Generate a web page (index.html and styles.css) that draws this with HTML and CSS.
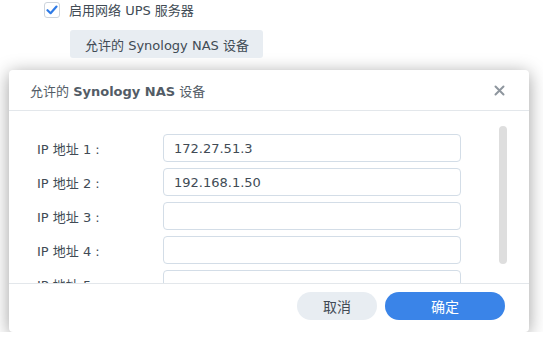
FILE: index.html
```html
<!DOCTYPE html>
<html>
	<head>
		<meta charset="utf-8">
		<title>UPS 服务器</title>
		<link rel="stylesheet" href="styles.css">
	</head>
	<body>

	<section class="page">
		<label class="check-row">
			<span class="checkbox">
				<svg width="12" height="10" viewBox="0 0 12 10"><path d="M1.5 5.2 L4.6 8.2 L10.5 1.6" fill="none" stroke="#2f7be6" stroke-width="2.2" stroke-linecap="round" stroke-linejoin="round"/></svg>
			</span>
			<span>启用网络 UPS 服务器</span>
		</label>
		<button class="btn-plain">允许的 Synology NAS 设备</button>
	</section>

	<div class="modal">
		<div class="modal-head">
			<span class="modal-title">允许的 <b>Synology NAS</b> 设备</span>
			<svg class="close" width="11" height="11" viewBox="0 0 11 11"><path d="M1.5 1.5 L9.5 9.5 M9.5 1.5 L1.5 9.5" stroke="#8e969e" stroke-width="2" stroke-linecap="round"/></svg>
		</div>
		<div class="modal-body">
			<div class="form">
				<span class="lbl">IP 地址 1 :</span><input class="field" value="172.27.51.3">
				<span class="lbl">IP 地址 2 :</span><input class="field" value="192.168.1.50">
				<span class="lbl">IP 地址 3 :</span><input class="field" value="">
				<span class="lbl">IP 地址 4 :</span><input class="field" value="">
				<span class="lbl">IP 地址 5 :</span><input class="field" value="">
			</div>
			<div class="scrollbar"></div>
		</div>
		<div class="modal-foot">
			<button class="btn-cancel">取消</button>
			<button class="btn-ok">确定</button>
		</div>
	</div>

	</body>
</html>
```

FILE: styles.css
```css
* {
	margin: 0;
	padding: 0;
	box-sizing: border-box;
}
body {
	background: #fff;
	font-family: "DejaVu Sans", "Noto Sans CJK SC", sans-serif;
	font-size: 13px;
	color: #414b55;
}
.page {
	padding-left: 44px;
}
.check-row {
	display: flex;
	align-items: center;
	gap: 9px;
	height: 18px;
	padding-top: 1px;
}
.checkbox {
	width: 16px;
	height: 16px;
	border: 1px solid #cdd4dc;
	border-radius: 3px;
	display: flex;
	align-items: center;
	justify-content: center;
}
.btn-plain {
	margin: 12px 0 0 26px;
	height: 28px;
	padding: 0 14px 0 15px;
	border: none;
	border-radius: 3px;
	background: #e8edf2;
	color: #414b55;
	font: inherit;
}
.modal {
	margin: 12px 0 0 9px;
	width: 520px;
	background: #fff;
	border-radius: 4px;
	box-shadow: 0 3px 18px rgba(0, 0, 0, 0.38);
}
.modal-head {
	height: 41px;
	border-bottom: 1px solid #e3e7eb;
	display: flex;
	align-items: center;
	justify-content: space-between;
	padding: 0 24px 0 21px;
}
.modal-title {
	color: #535c66;
}
.modal-title b {
	font-weight: bold;
}
.modal-body {
	height: 172px;
	overflow: hidden;
	position: relative;
	padding: 23px 0 0 28px;
}
.form {
	display: grid;
	grid-template-columns: 126px 298px;
	row-gap: 6px;
	align-items: center;
}
.field {
	height: 28px;
	border: 1px solid #d3dde7;
	border-radius: 4px;
	padding: 0 10px;
	font: inherit;
	color: #414b55;
	outline: none;
}
.scrollbar {
	position: absolute;
	top: 15px;
	right: 22px;
	width: 8px;
	height: 138px;
	border-radius: 4px;
	background: #dedede;
}
.modal-foot {
	border-top: 1px solid #e3e7eb;
	display: flex;
	justify-content: flex-end;
	gap: 8px;
	padding: 8px 24px 12px;
}
.modal-foot button {
	height: 28px;
	border: none;
	border-radius: 14px;
	font: inherit;
	font-size: 14px;
}
.btn-cancel {
	width: 80px;
	background: #e8edf2;
	color: #414b55;
}
.btn-ok {
	width: 120px;
	background: #3a84e8;
	color: #fff;
}
```
